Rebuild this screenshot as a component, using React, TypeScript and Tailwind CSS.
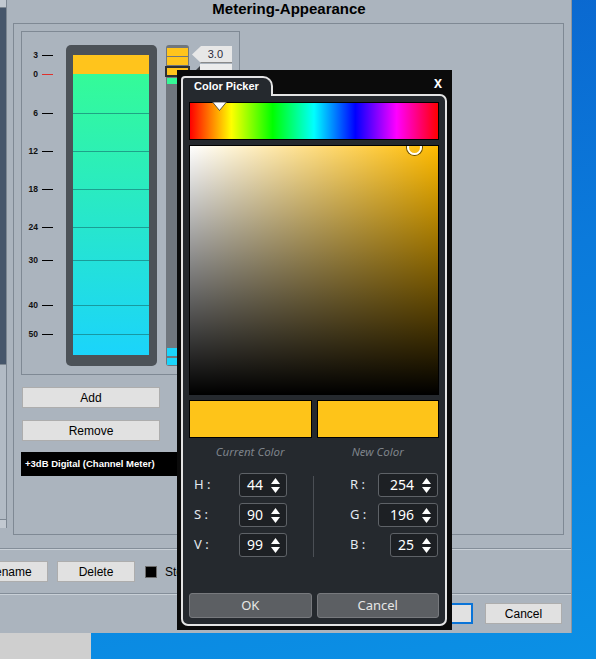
import React from 'react';

const SCALE = [
    { label: "3", y: 55 },
    { label: "0", y: 74, red: true },
    { label: "6", y: 113 },
    { label: "12", y: 151 },
    { label: "18", y: 189 },
    { label: "24", y: 227 },
    { label: "30", y: 260 },
    { label: "40", y: 305 },
    { label: "50", y: 334 },
];

// heights of the green segments between the scale lines
const SEGMENTS = [39, 38, 38, 38, 33, 45, 29, 21];

function Spin() {
    return (
        <svg width="9" height="15" viewBox="0 0 9 15">
            <path d="M4.5 0 L9 6 H0 Z" fill="#ffffff" />
            <path d="M0 9 H9 L4.5 15 Z" fill="#ffffff" />
        </svg>
    );
}

function Field({ value, w }: { value: string; w: string }) {
    return (
        <div className={`${w} h-[24px] rounded-[3px] border border-[#5e6267] bg-[#1d2024] flex items-center justify-end gap-[8px] pr-[6px]`}>
            <span className="text-[14px] leading-none text-white">{value}</span>
            <Spin />
        </div>
    );
}

function Row({ label, children }: { label: string; children: React.ReactNode }) {
    return (
        <div className="h-[24px] flex items-center justify-between">
            <span className="pl-[5px] text-[13px] text-[#e2e8f0]">{label}</span>
            {children}
        </div>
    );
}

function GrayButton({ label, className }: { label: string; className: string }) {
    return (
        <div className={`${className} h-[21px] bg-[#e1e1e1] border border-[#adadad] flex items-center justify-center text-[12px] text-black`}>
            {label}
        </div>
    );
}

function ColorPicker() {
    return (
        <div className="absolute left-[177px] top-[70px] w-[275px] h-[560px] bg-[#0b0b0b] pl-[4px] pt-[6px] font-['Noto_Sans',sans-serif]">
            <div className="absolute right-[10px] top-[8px] text-[12px] leading-[12px] font-bold text-white">X</div>

            {/* Tab */}
            <div className="relative z-10 w-[92px] h-[20px] -mb-[2px] border-2 border-b-0 border-[#e4e4e4] rounded-tl-[4px] rounded-tr-[10px] bg-[#25292e] pl-[11px] font-['Liberation_Sans',sans-serif] text-[11px] font-bold leading-[16px] text-white">
                Color Picker
            </div>

            <div className="w-[266px] h-[532px] border-2 border-[#e4e4e4] rounded-[7px] rounded-tl-none bg-[#25292e] px-[6px] pt-[6px] flex flex-col">
                {/* Hue bar */}
                <div className="relative w-[250px] h-[38px] border border-black bg-[linear-gradient(to_right,#ff0000,#ffff00,#00ff00,#00ffff,#0000ff,#ff00ff,#ff0000)]">
                    <svg className="absolute left-[22px] -top-px" width="15" height="10" viewBox="0 0 15 10">
                        <path d="M0.5 0 H14.5 L7.5 8.5 Z" fill="#ffffff" stroke="#333" strokeWidth="0.8" />
                    </svg>
                </div>

                {/* Saturation / value square */}
                <div className="relative mt-[5px] w-[250px] h-[250px] border border-black bg-[#ffbb00] overflow-hidden">
                    <div className="absolute inset-0 bg-[linear-gradient(to_right,#ffffff,rgba(255,255,255,0))]" />
                    <div className="absolute inset-0 bg-[linear-gradient(to_top,#000000,rgba(0,0,0,0))]" />
                    <div className="absolute left-[217px] -top-[6px] w-[15px] h-[15px] rounded-full border-2 border-white shadow-[0_0_0_1px_rgba(0,0,0,0.6)]" />
                </div>

                {/* Swatches */}
                <div className="mt-[5px] flex gap-[5px]">
                    <div className="flex-1 h-[38px] bg-[#fec419] border border-black" />
                    <div className="flex-1 h-[38px] bg-[#fec419] border border-black" />
                </div>
                <div className="mt-[6px] flex gap-[5px] text-[11.5px] leading-[16px] italic text-[#7e838a]">
                    <div className="flex-1 text-center">Current Color</div>
                    <div className="flex-1 text-center">New Color</div>
                </div>

                {/* HSV / RGB fields */}
                <div className="mt-[13px] flex">
                    <div className="w-[98px] flex flex-col gap-[6px]">
                        <Row label="H :"><Field value="44" w="w-[48px]" /></Row>
                        <Row label="S :"><Field value="90" w="w-[48px]" /></Row>
                        <Row label="V :"><Field value="99" w="w-[48px]" /></Row>
                    </div>
                    <div className="ml-[26px] mt-[3px] w-px h-[81px] bg-[#4b4f55]" />
                    <div className="ml-[31px] w-[93px] flex flex-col gap-[6px]">
                        <Row label="R :"><Field value="254" w="w-[60px]" /></Row>
                        <Row label="G :"><Field value="196" w="w-[60px]" /></Row>
                        <Row label="B :"><Field value="25" w="w-[48px]" /></Row>
                    </div>
                </div>

                <div className="mt-[36px] flex gap-[5px]">
                    <div className="flex-1 h-[25px] rounded-[3px] bg-[#5c5f63] border border-[#77797d] flex items-center justify-center text-[13px] text-[#e6e6e6]">OK</div>
                    <div className="flex-1 h-[25px] rounded-[3px] bg-[#5c5f63] border border-[#77797d] flex items-center justify-center text-[13px] text-[#e6e6e6]">Cancel</div>
                </div>
            </div>
        </div>
    );
}

function MeterEditor() {
    return (
        <div className="w-[219px] h-[344px] border border-[#7f8994] flex">
            {/* dB scale */}
            <div className="relative w-[44px] h-full">
                {SCALE.map((s) => (
                    <div key={s.label} className="absolute left-0 flex items-center" style={{ top: s.y - 32 - 4 }}>
                        <span className="w-[16px] text-right text-[8.5px] leading-[8px] font-extrabold text-[#111]">{s.label}</span>
                        <span className={s.red ? "ml-[4px] w-[11px] h-px bg-[#e0302c]" : "ml-[4px] w-[11px] h-px bg-black"} />
                    </div>
                ))}
            </div>

            {/* Main meter */}
            <div className="mt-[13px] w-[91px] h-[321px] rounded-[5px] bg-[#4c5258] pt-[10px] pl-[7px]">
                <div className="w-[76px] h-[19px] bg-[#ffc41c]" />
                <div className="w-[76px] h-[281px] flex flex-col bg-[linear-gradient(to_bottom,#34fb98,#1bd4fb)]">
                    {SEGMENTS.map((h, i) => (
                        <div key={i} className={i === 0 ? "" : "border-t border-[rgba(20,110,110,0.6)]"} style={{ height: h }} />
                    ))}
                </div>
            </div>

            {/* Small meter */}
            <div className="ml-[9px] mt-[13px] w-[23px] h-[321px] rounded-[3px] bg-[#70767d] pt-[3px] px-px flex flex-col">
                <div className="h-[8px] bg-[#ffc41c]" />
                <div className="mt-px h-[8px] bg-[#ffc41c]" />
                <div className="mt-px -mx-[2px] h-[11px] border-2 border-[#2c3035] bg-[#ffc41c]" />
                <div className="mt-px h-[6px] bg-[#35f896]" />
                <div className="flex-1" />
                <div className="h-[8px] bg-[#1bd4fb]" />
                <div className="mt-[2px] mb-px h-[7px] bg-[#1bd4fb]" />
            </div>

            {/* Value tags */}
            <div className="ml-[3px] mt-[14px] flex flex-col">
                <div className="w-[40px] h-[17px] bg-[#e7e7e7] border-b border-[#8a8a8a] [clip-path:polygon(9px_0,100%_0,100%_100%,9px_100%,0_50%)] flex items-center justify-end pr-[9px] text-[11px] text-[#2a2a3a]">
                    3.0
                </div>
                <div className="mt-px flex items-start">
                    <div className="mt-[2px] ml-[4px] w-0 h-0 border-y-[4px] border-y-transparent border-r-[4px] border-r-[#3a3e44]" />
                    <div className="w-[32px] h-[12px] bg-[#ececec]" />
                </div>
            </div>
        </div>
    );
}

export default function App() {
    return (
        <div className="relative w-[596px] h-[659px] overflow-hidden bg-[linear-gradient(170deg,#0a62cc_0%,#0b7adb_45%,#0b90e5_100%)] font-['Liberation_Sans',Arial,sans-serif]">
            {/* Metering-Appearance window */}
            <div className="w-[572px] h-[633px] bg-[#abb4be] border-r border-[#8c95a0] flex flex-col">
                <div className="h-[535px] flex">
                    {/* left list strip */}
                    <div className="w-[7px] h-[528px] flex flex-col border-r border-[#7d8792]">
                        <div className="h-[8px] bg-[#c2c9d1] border-b border-[#7d8792]" />
                        <div className="h-[357px] bg-[#46566b] border-b border-[#7d8792]" />
                        <div className="flex-1 bg-[#b2bbc5]" />
                        <div className="h-[9px] bg-[#c2c9d1] border-t border-[#7d8792]" />
                    </div>

                    <div className="flex-1 flex flex-col">
                        <div className="h-[23px] text-center">
                            <span className="relative -top-[3px] text-[15px] leading-[15px] font-bold text-black">Metering-Appearance</span>
                        </div>
                        <div className="ml-[6px] w-[551px] h-[512px] border border-[#7f8994] pl-[7px] pt-[7px] flex flex-col">
                            <MeterEditor />
                            <GrayButton label="Add" className="mt-[12px] ml-px w-[138px]" />
                            <GrayButton label="Remove" className="mt-[12px] ml-px w-[138px]" />
                            <div className="mt-[11px] w-[157px] h-[24px] bg-black pl-[4px] flex items-center text-[9.5px] font-bold text-white">
                                +3dB Digital (Channel Meter)
                            </div>
                        </div>
                    </div>
                </div>

                <div className="mt-[13px] h-px bg-[#848e99]" />
                <div className="h-px bg-[#c9d0d7]" />

                <div className="mt-[11px] h-[21px] flex items-center">
                    <GrayButton label="Rename" className="-ml-[30px] w-[78px]" />
                    <GrayButton label="Delete" className="ml-[9px] w-[78px]" />
                    <div className="ml-[10px] w-[12px] h-[12px] bg-black border border-[#6b6b6b]" />
                    <span className="ml-[8px] text-[12px] text-black">Store</span>
                </div>

                <div className="mt-[11px] h-px bg-[#848e99]" />
                <div className="h-px bg-[#c9d0d7]" />

                <div className="mt-[8px] flex justify-end gap-[12px] pr-[9px]">
                    <div className="w-[77px] h-[21px] bg-[#e1e1e1] border-2 border-[#0a74d8] flex items-center justify-center text-[12px]">OK</div>
                    <GrayButton label="Cancel" className="w-[77px]" />
                </div>
            </div>
            <div className="w-[91px] h-[26px] bg-[#cfcfcf]" />

            <ColorPicker />
        </div>
    );
}
